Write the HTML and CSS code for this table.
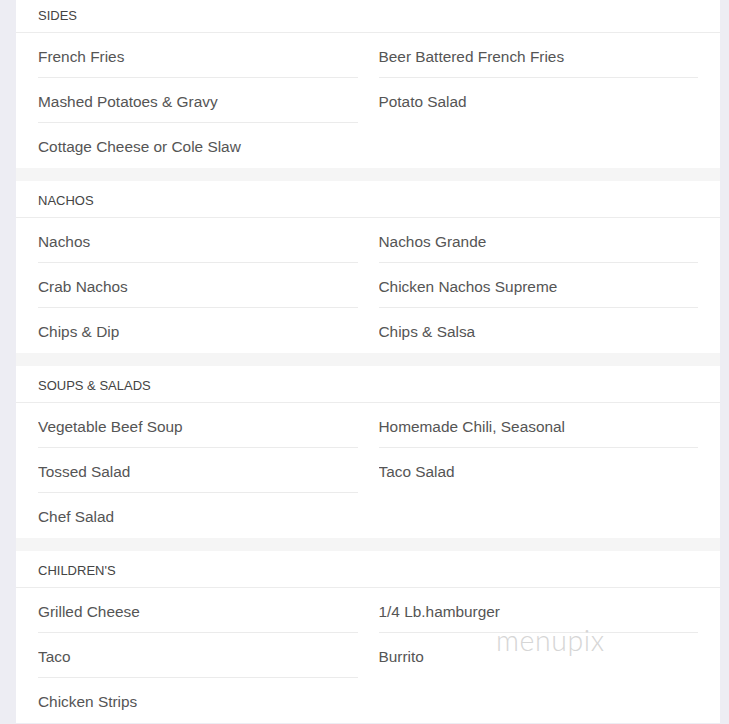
FILE: index.html
```html
<!DOCTYPE html>
<html>
<head>
<meta charset="utf-8">
<link rel="stylesheet" href="styles.css">
</head>
<body>
<div class="page">
  <section class="card">
    <div class="head">SIDES</div>
    <div class="grid">
      <div class="item">French Fries</div>
      <div class="item">Beer Battered French Fries</div>
      <div class="item">Mashed Potatoes &amp; Gravy</div>
      <div class="item last">Potato Salad</div>
      <div class="item last">Cottage Cheese or Cole Slaw</div>
    </div>
  </section>
  <section class="card">
    <div class="head">NACHOS</div>
    <div class="grid">
      <div class="item">Nachos</div>
      <div class="item">Nachos Grande</div>
      <div class="item">Crab Nachos</div>
      <div class="item">Chicken Nachos Supreme</div>
      <div class="item last">Chips &amp; Dip</div>
      <div class="item last">Chips &amp; Salsa</div>
    </div>
  </section>
  <section class="card">
    <div class="head">SOUPS &amp; SALADS</div>
    <div class="grid">
      <div class="item">Vegetable Beef Soup</div>
      <div class="item">Homemade Chili, Seasonal</div>
      <div class="item">Tossed Salad</div>
      <div class="item last">Taco Salad</div>
      <div class="item last">Chef Salad</div>
    </div>
  </section>
  <section class="card card-wm">
    <div class="head">CHILDREN'S</div>
    <div class="grid">
      <div class="item">Grilled Cheese</div>
      <div class="item">1/4 Lb.hamburger</div>
      <div class="item">Taco</div>
      <div class="item last">Burrito</div>
      <div class="item last">Chicken Strips</div>
    </div>
    <div class="watermark">menupix</div>
  </section>
</div>
</body>
</html>
```

FILE: styles.css
```css
html, body {
  margin: 0;
  padding: 0;
  background: #ededf3;
}
body {
  font-family: "Liberation Sans", Arial, sans-serif;
  color: #555;
}
.page {
  margin: -4px 9px 0 16px;
  background: #f5f5f5;
  display: flex;
  flex-direction: column;
  gap: 13px;
}
.card {
  background: #fff;
  position: relative;
}
.head {
  height: 36px;
  line-height: 40px;
  padding-left: 22px;
  font-size: 13px;
  color: #444;
  border-bottom: 1px solid #ececec;
}
.grid {
  display: grid;
  grid-template-columns: 1fr 1fr;
  column-gap: 21px;
  padding: 0 22px 0 22px;
}
.item {
  height: 44px;
  line-height: 47px;
  font-size: 15.4px;
  color: #555;
  border-bottom: 1px solid #ebebeb;
  overflow: hidden;
}
.item.last {
  border-bottom-color: transparent;
}
.watermark {
  position: absolute;
  left: 480px;
  top: 72px;
  font-family: Lato, "Liberation Sans", sans-serif;
  font-weight: 300;
  font-size: 28.5px;
  letter-spacing: 0.6px;
  color: #d6d6d6;
}
```
